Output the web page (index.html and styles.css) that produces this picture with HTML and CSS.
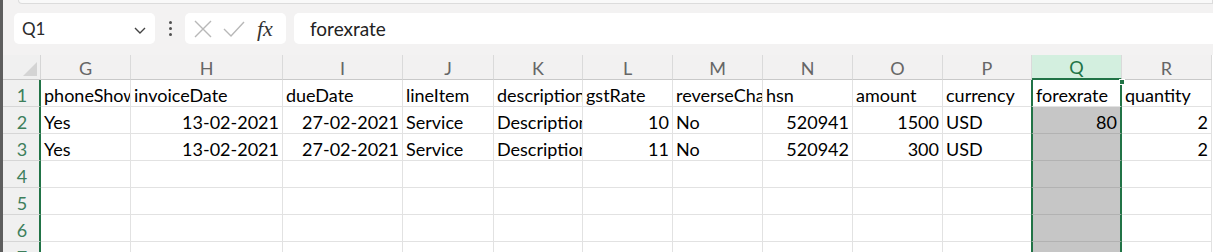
FILE: index.html
```html
<!DOCTYPE html>
<html lang="en">
<head>
    <meta charset="UTF-8">
    <title>Invoices - Sheet</title>
    <link rel="stylesheet" href="styles.css">
</head>
<body>
    <div class="window">
        <div class="edge"></div>
        <div class="main">
            <div class="ribbon-end"></div>

            <div class="formula-row">
                <div class="name-box">
                    <span>Q1</span>
                    <svg class="chevron" width="14" height="10" viewBox="0 0 14 10">
                        <polyline points="2,3 7,8 12,3" fill="none" stroke="#444" stroke-width="1.4"/>
                    </svg>
                </div>
                <div class="grip"><i></i><i></i><i></i></div>
                <div class="fx-box">
                    <svg width="20" height="20" viewBox="0 0 20 20">
                        <path d="M2 2 L18 18 M18 2 L2 18" stroke="#b8b8b8" stroke-width="1.4"/>
                    </svg>
                    <svg width="24" height="20" viewBox="0 0 24 20">
                        <polyline points="2,10 9,17 22,3" fill="none" stroke="#b8b8b8" stroke-width="1.4"/>
                    </svg>
                    <span class="fx">fx</span>
                </div>
                <div class="formula-input">forexrate</div>
            </div>

            <div class="sheet">
                <div class="corner"><span class="tri"></span></div>
                <div class="col-head">G</div>
                <div class="col-head">H</div>
                <div class="col-head">I</div>
                <div class="col-head">J</div>
                <div class="col-head">K</div>
                <div class="col-head">L</div>
                <div class="col-head">M</div>
                <div class="col-head">N</div>
                <div class="col-head">O</div>
                <div class="col-head">P</div>
                <div class="col-head current">Q</div>
                <div class="col-head">R</div>

                <div class="row-head">1</div>
                <div class="cell">phoneShow</div>
                <div class="cell">invoiceDate</div>
                <div class="cell">dueDate</div>
                <div class="cell">lineItem</div>
                <div class="cell">description</div>
                <div class="cell">gstRate</div>
                <div class="cell">reverseCharge</div>
                <div class="cell">hsn</div>
                <div class="cell">amount</div>
                <div class="cell">currency</div>
                <div class="cell sel active">forexrate<span class="handle"></span></div>
                <div class="cell">quantity</div>

                <div class="row-head">2</div>
                <div class="cell">Yes</div>
                <div class="cell num">13-02-2021</div>
                <div class="cell num">27-02-2021</div>
                <div class="cell">Service</div>
                <div class="cell">Description</div>
                <div class="cell num">10</div>
                <div class="cell">No</div>
                <div class="cell num">520941</div>
                <div class="cell num">1500</div>
                <div class="cell">USD</div>
                <div class="cell num sel">80</div>
                <div class="cell num">2</div>

                <div class="row-head">3</div>
                <div class="cell">Yes</div>
                <div class="cell num">13-02-2021</div>
                <div class="cell num">27-02-2021</div>
                <div class="cell">Service</div>
                <div class="cell">Description</div>
                <div class="cell num">11</div>
                <div class="cell">No</div>
                <div class="cell num">520942</div>
                <div class="cell num">300</div>
                <div class="cell">USD</div>
                <div class="cell num sel"></div>
                <div class="cell num">2</div>

                <div class="row-head">4</div>
                <div class="cell"></div><div class="cell"></div><div class="cell"></div><div class="cell"></div><div class="cell"></div><div class="cell"></div><div class="cell"></div><div class="cell"></div><div class="cell"></div><div class="cell"></div><div class="cell sel"></div><div class="cell"></div>

                <div class="row-head">5</div>
                <div class="cell"></div><div class="cell"></div><div class="cell"></div><div class="cell"></div><div class="cell"></div><div class="cell"></div><div class="cell"></div><div class="cell"></div><div class="cell"></div><div class="cell"></div><div class="cell sel"></div><div class="cell"></div>

                <div class="row-head">6</div>
                <div class="cell"></div><div class="cell"></div><div class="cell"></div><div class="cell"></div><div class="cell"></div><div class="cell"></div><div class="cell"></div><div class="cell"></div><div class="cell"></div><div class="cell"></div><div class="cell sel"></div><div class="cell"></div>

                <div class="row-head">7</div>
                <div class="cell"></div><div class="cell"></div><div class="cell"></div><div class="cell"></div><div class="cell"></div><div class="cell"></div><div class="cell"></div><div class="cell"></div><div class="cell"></div><div class="cell"></div><div class="cell sel"></div><div class="cell"></div>
            </div>
        </div>
    </div>
</body>
</html>
```

FILE: styles.css
```css
* {
    box-sizing: border-box;
    margin: 0;
    padding: 0;
}
body {
    font-family: 'Lato', 'Noto Sans', sans-serif;
    background: #f3f2f2;
    width: 1213px;
    height: 252px;
    overflow: hidden;
}
.window {
    display: flex;
    height: 252px;
}
.edge {
    width: 3px;
    background: #5e5e5e;
    flex-shrink: 0;
}
.main {
    flex: 1;
    min-width: 0;
}
.ribbon-end {
    height: 4px;
    margin-left: 15px;
    background: #f9f9f9;
    border: 1px solid #dcdcdc;
    border-top: none;
    border-radius: 0 0 0 6px;
    margin-bottom: 9px;
}

/* name box + formula bar */
.formula-row {
    display: flex;
    align-items: center;
    height: 31px;
    padding-left: 11px;
}
.name-box {
    width: 141px;
    height: 31px;
    background: #fff;
    border-radius: 5px;
    display: flex;
    align-items: center;
    justify-content: space-between;
    padding: 0 8px 0 8px;
    font-size: 17px;
    color: #2b2b2b;
}
.chevron {
    margin-top: 2px;
}
.grip {
    width: 30px;
    display: flex;
    flex-direction: column;
    align-items: center;
    gap: 3px;
}
.grip i {
    width: 3px;
    height: 3px;
    border-radius: 50%;
    background: #505050;
}
.fx-box {
    width: 101px;
    height: 31px;
    background: #fff;
    border-radius: 5px;
    display: flex;
    align-items: center;
    gap: 9px;
    padding-left: 8px;
}
.fx {
    font-family: 'Liberation Serif', serif;
    font-style: italic;
    font-size: 22px;
    color: #333;
    margin-left: 2px;
}
.formula-input {
    flex: 1;
    height: 31px;
    margin-left: 8px;
    background: #fff;
    border-radius: 5px 0 0 5px;
    display: flex;
    align-items: center;
    padding-left: 16px;
    font-size: 19px;
    color: #222;
}

/* grid */
.sheet {
    margin-top: 11px;
    display: grid;
    grid-template-columns: 38px 90px 152px 120px 91px 89px 90px 90px 90px 90px 89px 90px 90px;
    grid-template-rows: 25px repeat(7, 27px);
    background: #fff;
}
.corner {
    background: #f0f0f0;
    border-right: 1px solid #d6d6d6;
    border-bottom: 1px solid #c9c9c9;
    position: relative;
}
.corner .tri {
    position: absolute;
    right: 3px;
    bottom: 3px;
    width: 0;
    height: 0;
    border-left: 14px solid transparent;
    border-bottom: 14px solid #d4d4d4;
}
.col-head {
    background: #f2f1f1;
    border-right: 1px solid #dadada;
    border-bottom: 1px solid #c9c9c9;
    display: flex;
    align-items: center;
    justify-content: center;
    font-size: 18px;
    color: #666;
    padding-top: 1px;
}
.col-head.current {
    background: #d3efdf;
    color: #217346;
    border-bottom: 2px solid #217346;
}
.row-head {
    background: #f0f0f0;
    border-right: 2px solid #217346;
    border-bottom: 1px solid #d6d6d6;
    display: flex;
    align-items: flex-end;
    justify-content: center;
    padding-left: 2px;
    font-size: 18px;
    color: #3d7f5c;
}
.cell {
    border-right: 1px solid #e2e2e2;
    border-bottom: 1px solid #e2e2e2;
    display: flex;
    align-items: flex-end;
    padding: 0 3px 0 3px;
    font-size: 18px;
    color: #000;
    white-space: nowrap;
    overflow: hidden;
}
.cell.num {
    justify-content: flex-end;
}

/* selected column Q */
.cell.sel {
    background: #c6c6c6;
    border-left: 2px solid #217346;
    border-right: 2px solid #217346;
    border-bottom-color: #b2b2b2;
    margin-left: -1px;
    padding-right: 3px;
}
.cell.active {
    background: #fff;
    border-bottom-color: #e2e2e2;
    overflow: visible;
    position: relative;
}
.handle {
    position: absolute;
    right: -5px;
    top: -1px;
    width: 6px;
    height: 6px;
    background: #217346;
    border: 1px solid #fff;
}
```
